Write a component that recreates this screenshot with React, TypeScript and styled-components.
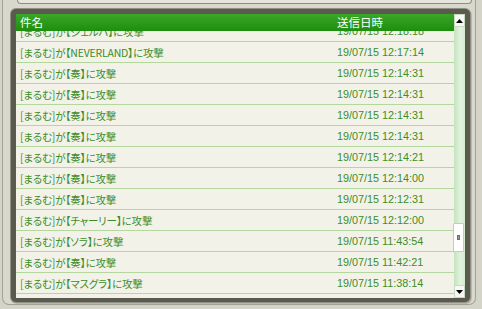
import React from "react";
import styled, { createGlobalStyle } from "styled-components";

const Global = createGlobalStyle`
  html, body { margin: 0; padding: 0; background: #d5d4c8; }
  #root { width: 482px; height: 309px; }
`;

const Page = styled.div`
  width: 482px;
  height: 309px;
  box-sizing: border-box;
  background: #d5d4c8;
  overflow: hidden;
  padding-left: 2px;
  padding-right: 6px;
`;

const Outer = styled.div`
  height: 305px;
  box-sizing: border-box;
  border-left: 1px solid #a3a298;
  border-right: 1px solid #a3a298;
  border-bottom: 1px solid #a3a298;
  border-bottom-left-radius: 7px;
  border-bottom-right-radius: 7px;
  background: #d9d8cd;
  padding-left: 8px;
`;

const TopTab = styled.div`
  height: 4px;
  margin: 0 3px 0 6px;
  box-sizing: border-box;
  border: 1px solid #8e8d84;
  border-top: none;
  border-bottom-left-radius: 4px;
  border-bottom-right-radius: 4px;
  background: #e6e5db;
`;

const Frame = styled.div`
  margin-top: 5px;
  width: 459px;
  height: 293px;
  box-sizing: border-box;
  background: #5a5a4f;
  border-radius: 5px;
  box-shadow: 0 0 0 1px #909087, 1px 1px 0 1px #b8b7ad;
  padding: 5px 5px 4px 5px;
  display: flex;
`;

const ListPane = styled.div`
  width: 438px;
  display: flex;
  flex-direction: column;
  background: #f3f2e8;
`;

const Cols = styled.div`
  display: grid;
  grid-template-columns: 1fr 117px;
  align-items: center;
  padding-left: 4px;
`;

const Header = styled(Cols)`
  height: 17px;
  flex: none;
  background: linear-gradient(#3aa628, #1e8e0e);
  color: #ffffff;
  font-family: "Noto Sans CJK JP", sans-serif;
  font-size: 11.5px;
  line-height: 17px;
  position: relative;
  z-index: 1;
`;

const Body = styled.div`
  flex: 1;
  overflow: hidden;
`;

const Rows = styled.div<{ $offset: number }>`
  margin-top: ${(p) => p.$offset}px;
`;

const Row = styled(Cols)`
  height: 21px;
  box-sizing: border-box;
  border-bottom: 1px solid #b3d79f;
  color: #3b8d2b;
`;

const Subject = styled.span`
  font-family: "Noto Sans CJK JP", sans-serif;
  font-size: 10.5px;
  font-feature-settings: "palt";
  letter-spacing: -0.2px;
  white-space: nowrap;
`;

const DateCell = styled.span`
  font-family: "Liberation Sans", "DejaVu Sans", sans-serif;
  font-size: 10.8px;
  white-space: nowrap;
`;

const Scrollbar = styled.div`
  width: 11px;
  display: flex;
  flex-direction: column;
  background: linear-gradient(90deg, #c3e4bd, #e2f2de 60%, #d4ebcf);
`;

const ArrowBtn = styled.div`
  height: 13px;
  flex: none;
  box-sizing: border-box;
  background: #f7f8f3;
  border: 1px solid #c8dcc2;
  display: flex;
  align-items: center;
  justify-content: center;
`;

const Track = styled.div`
  flex: 1;
  position: relative;
`;

const Thumb = styled.div`
  position: absolute;
  left: -1px;
  right: 1px;
  top: 196px;
  height: 29px;
  box-sizing: border-box;
  background: #ffffff;
  border: 1px solid #b9d4b1;
  border-radius: 1px;
  display: flex;
  align-items: center;
  justify-content: center;
`;

const Grip = styled.div`
  width: 3px;
  height: 5px;
  background: #9a9a9a;
  border: 1px solid #6e6e6e;
  box-sizing: border-box;
`;

const rows: [string, string][] = [
  ["[まるむ]が【ジェルバ】に攻撃", "19/07/15 12:18:18"],
  ["[まるむ]が【NEVERLAND】に攻撃", "19/07/15 12:17:14"],
  ["[まるむ]が【奏】に攻撃", "19/07/15 12:14:31"],
  ["[まるむ]が【奏】に攻撃", "19/07/15 12:14:31"],
  ["[まるむ]が【奏】に攻撃", "19/07/15 12:14:31"],
  ["[まるむ]が【奏】に攻撃", "19/07/15 12:14:31"],
  ["[まるむ]が【奏】に攻撃", "19/07/15 12:14:21"],
  ["[まるむ]が【奏】に攻撃", "19/07/15 12:14:00"],
  ["[まるむ]が【奏】に攻撃", "19/07/15 12:12:31"],
  ["[まるむ]が【チャーリー】に攻撃", "19/07/15 12:12:00"],
  ["[まるむ]が【ソラ】に攻撃", "19/07/15 11:43:54"],
  ["[まるむ]が【奏】に攻撃", "19/07/15 11:42:21"],
  ["[まるむ]が【マスグラ】に攻撃", "19/07/15 11:38:14"],
  ["[まるむ]が【奏】に攻撃", "19/07/15 11:37:02"],
];

const Up = () => (
  <svg width="7" height="4" viewBox="0 0 7 4">
    <path d="M3.5 0 L7 4 L0 4 Z" fill="#000" />
  </svg>
);
const Down = () => (
  <svg width="7" height="4" viewBox="0 0 7 4">
    <path d="M0 0 L7 0 L3.5 4 Z" fill="#000" />
  </svg>
);

export default function App() {
  return (
    <>
      <Global />
      <Page>
        <Outer>
          <TopTab />
          <Frame>
            <ListPane>
              <Header>
                <span>件名</span>
                <span>送信日時</span>
              </Header>
              <Body>
                <Rows $offset={-10}>
                  {rows.map(([s, d], i) => (
                    <Row key={i}>
                      <Subject>{s}</Subject>
                      <DateCell>{d}</DateCell>
                    </Row>
                  ))}
                </Rows>
              </Body>
            </ListPane>
            <Scrollbar>
              <ArrowBtn>
                <Up />
              </ArrowBtn>
              <Track>
                <Thumb>
                  <Grip />
                </Thumb>
              </Track>
              <ArrowBtn>
                <Down />
              </ArrowBtn>
            </Scrollbar>
          </Frame>
        </Outer>
      </Page>
    </>
  );
}
